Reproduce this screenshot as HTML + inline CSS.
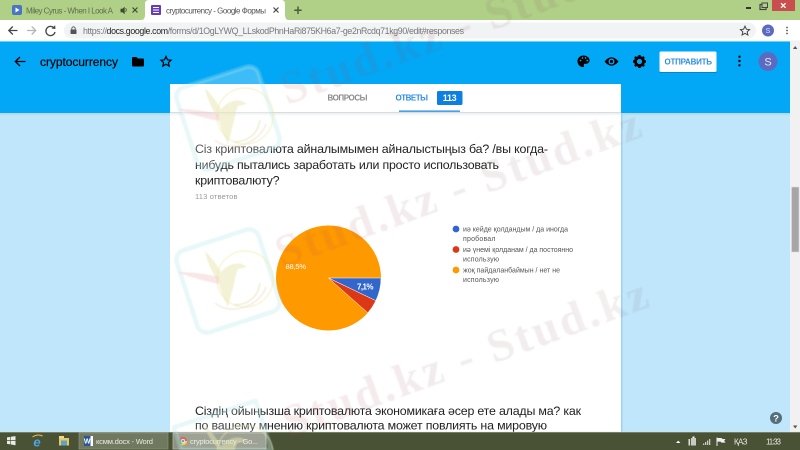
<!DOCTYPE html>
<html><head><meta charset="utf-8"><style>
html,body{margin:0;padding:0;width:800px;height:450px;overflow:hidden;background:#bfe6fb}
#w{position:absolute;left:0;top:0;width:800px;height:450px;overflow:hidden}
svg{display:block}
text{font-family:"Liberation Sans","DejaVu Sans",sans-serif}
</style></head><body><div id="w">
<svg width="800" height="450" viewBox="0 0 800 450" xmlns="http://www.w3.org/2000/svg">
<defs>
<filter id="b" x="-5%" y="-5%" width="110%" height="110%"><feGaussianBlur stdDeviation="0.38"/></filter>
<filter id="b2" x="-5%" y="-5%" width="110%" height="110%"><feGaussianBlur stdDeviation="0.5"/></filter>
<linearGradient id="sh" x1="0" y1="0" x2="0" y2="1"><stop offset="0" stop-color="#8fa8b5" stop-opacity=".55"/><stop offset="1" stop-color="#8fa8b5" stop-opacity="0"/></linearGradient>
<linearGradient id="wm" x1="0" y1="0" x2="1" y2="0"><stop offset="0" stop-color="#b84a58" stop-opacity=".11"/><stop offset=".5" stop-color="#805c60" stop-opacity=".11"/><stop offset="1" stop-color="#8c5a60" stop-opacity=".1"/></linearGradient>
<g id="logo">
<g transform="rotate(-18)">
<rect x="-43" y="-43" width="86" height="86" rx="10" fill="#fff" fill-opacity=".24" stroke="#b4e6e8" stroke-opacity=".3" stroke-width="4.5"/>
</g>
<circle cx="17" cy="-2" r="28" fill="none" stroke="#eee9a0" stroke-opacity=".55" stroke-width="1.2"/>
<path d="M-23 -30 C-15 -22 -10 -14 -7 -9 C-2 -15 6 -19 14 -17 L19 -14 L10 -12 C7 -6 7 2 4 10 C3 16 1 21 0 26 C-5 16 -8 8 -9 2 C-14 -6 -21 -18 -23 -30Z" fill="#e8e6b0" fill-opacity=".5"/>
<path d="M-51 -9 C-36 -9 -20 -7 -9 -4 L-9 3 C-20 1 -36 -3 -51 -9Z" fill="#f0c4c4" fill-opacity=".4"/>
<path d="M-13 22 C0 34 30 28 38 6" fill="none" stroke="#eed9c4" stroke-opacity=".55" stroke-width="1.4"/>
<path d="M6 24 C20 24 30 16 32 2" fill="none" stroke="#dfe0a0" stroke-opacity=".55" stroke-width="1.4"/>
</g>
</defs>

<!-- page background -->
<rect x="0" y="0" width="800" height="450" fill="#bfe6fb"/>
<rect x="0" y="41" width="790" height="72" fill="#02a8f6"/>
<rect x="0" y="113" width="170" height="3" fill="url(#sh)" opacity=".5"/>
<rect x="621" y="113" width="169" height="3" fill="url(#sh)" opacity=".5"/>
<rect x="621" y="113" width="1.5" height="320" fill="#9fd0ee"/>
<rect x="170" y="84" width="451" height="349" fill="#fff"/>
<rect x="170" y="112" width="451" height="1" fill="#dcdcdc"/>
<rect x="170" y="113" width="451" height="3" fill="url(#sh)" opacity=".35"/>

<!-- chrome frame -->
<rect x="0" y="0" width="800" height="20" fill="#b0cf87"/>
<path d="M141 20 Q145 20 145 15 L145 4 Q145 0 149 0 L281 0 Q285 0 285 4 L285 15 Q285 20 289 20Z" fill="#fff"/>
<rect x="0" y="20" width="800" height="21" fill="#fff"/>
<rect x="64" y="22.5" width="692" height="16" rx="8" fill="#f1f3f4"/>
<rect x="0" y="40.5" width="800" height="1" fill="#e4f2f8"/>

<g filter="url(#b)">
<!-- tabs -->
<rect x="12" y="5" width="10" height="10" rx="2" fill="#4a76c4"/>
<path d="M15.5 7.5 L19.5 10 L15.5 12.5Z" fill="#fff"/>
<text x="26" y="13.5" font-size="8" fill="#5f6e4b" textLength="87">Miley Cyrus - When I Look A</text>
<path d="M120.5 8.8 h1.8 l2.4 -2 v7.4 l-2.4 -2 h-1.8z" fill="#3f4a33"/><path d="M125.6 8.3 q1.4 1.7 0 3.4" fill="none" stroke="#3f4a33" stroke-width=".8"/>
<path d="M132.5 7.5 l5 5 M137.5 7.5 l-5 5" stroke="#3f4a33" stroke-width="1.2"/>
<rect x="151" y="5" width="10" height="10" rx="1" fill="#673ab7"/>
<path d="M153 7.5h6M153 10h6M153 12.5h6" stroke="#fff" stroke-width="1"/>
<text x="166" y="13.5" font-size="8" fill="#555" textLength="100">cryptocurrency - Google Формы</text>
<path d="M273.5 7.5 l5 5 M278.5 7.5 l-5 5" stroke="#444" stroke-width="1.2"/>
<path d="M298 6.5 v7.5 M294.2 10.2 h7.5" stroke="#4f5c3d" stroke-width="1.5"/>
<!-- window controls -->
<rect x="746" y="7" width="5" height="2" fill="#333"/>
<rect x="760" y="4.5" width="6" height="5" fill="none" stroke="#444" stroke-width="1.2"/><rect x="762" y="3" width="5.5" height="4.5" fill="#b0cf87" stroke="#444" stroke-width="1"/>
<rect x="772" y="0" width="23" height="11" fill="#c9504f"/>
<path d="M781 3.2 l4.6 4.6 M785.6 3.2 l-4.6 4.6" stroke="#fff" stroke-width="1.3"/>
<!-- nav -->
<path d="M17.5 30.5 H9 M12.8 26.5 L8.8 30.5 L12.8 34.5" fill="none" stroke="#444" stroke-width="1.3"/>
<path d="M27 30.5 H35.5 M31.7 26.5 L35.7 30.5 L31.7 34.5" fill="none" stroke="#b5b5b5" stroke-width="1.3"/>
<path d="M54 28 A4.6 4.6 0 1 0 55 32" fill="none" stroke="#444" stroke-width="1.3"/><path d="M51.6 28.6 L55.4 29 L55.2 25.2Z" fill="#444"/>
<rect x="70.5" y="29.5" width="6" height="4.5" rx=".6" fill="#555"/><path d="M71.8 29.5 v-1 a1.7 1.7 0 0 1 3.4 0 v1" fill="none" stroke="#555" stroke-width=".9"/>
<text x="83" y="34" font-size="8.8" fill="#777" textLength="381">https://<tspan fill="#222">docs.google.com</tspan>/forms/d/1OgLYWQ_LLskodPhnHaRi875KH6a7-ge2nRcdq71kg90/edit#responses</text>
<path d="M745 26.2 l1.4 3 3.2 .4 -2.4 2.2 .7 3.2 -2.9 -1.7 -2.9 1.7 .7 -3.2 -2.4 -2.2 3.2 -.4z" fill="none" stroke="#444" stroke-width="1"/>
<circle cx="768" cy="30.5" r="6" fill="#5c6bc0"/>
<text x="768" y="33.2" font-size="7" fill="#dfe3f5" text-anchor="middle">S</text>
<circle cx="787" cy="27.5" r=".9" fill="#555"/><circle cx="787" cy="30.5" r=".9" fill="#555"/><circle cx="787" cy="33.5" r=".9" fill="#555"/>

<!-- forms header -->
<path d="M25.5 61.5 H15.5 M20 57 L15.3 61.5 L20 66" fill="none" stroke="#000" stroke-width="1.3"/>
<text x="40" y="66" font-size="12" fill="#000" stroke="#000" stroke-width=".2" textLength="78">cryptocurrency</text>
<path d="M132 58 a1 1 0 0 1 1 -1 h3.5 l1.5 1.5 h5 a1 1 0 0 1 1 1 v6 a1 1 0 0 1 -1 1 h-10 a1 1 0 0 1 -1 -1z" fill="#000"/>
<path d="M166 56.5 l1.5 3.3 3.6 .4 -2.7 2.4 .8 3.5 -3.2 -1.9 -3.2 1.9 .8 -3.5 -2.7 -2.4 3.6 -.4z" fill="none" stroke="#000" stroke-width="1.2"/>
<path d="M583.5 55.5 a5.8 5.8 0 0 0 -.5 11.6 c1.2 0 1.3 -1 .9 -1.6 c-.5 -.9 .1 -1.8 1.1 -1.8 h1.6 a3.3 3.3 0 0 0 3 -3.2 c0 -2.8 -2.8 -5 -6.1 -5z" fill="#000"/>
<circle cx="580.5" cy="60.5" r=".9" fill="#02a8f6"/><circle cx="582.5" cy="58" r=".9" fill="#02a8f6"/><circle cx="585.5" cy="58" r=".9" fill="#02a8f6"/><circle cx="587.3" cy="60.5" r=".9" fill="#02a8f6"/>
<path d="M604.5 61.5 q7 -8.5 14 0 q-7 8.5 -14 0z" fill="#000"/><circle cx="611.5" cy="61.5" r="3" fill="#02a8f6"/><circle cx="611.5" cy="61.5" r="1.6" fill="#000"/>
<circle cx="639.5" cy="61.5" r="4" fill="none" stroke="#000" stroke-width="2.8"/>
<path d="M639.5 55 v2.4 M639.5 65.6 v2.4 M633 61.5 h2.4 M643.6 61.5 h2.4 M634.9 56.9 l1.8 1.8 M642.3 64.3 l1.8 1.8 M644.1 56.9 l-1.8 1.8 M636.7 64.3 l-1.8 1.8" stroke="#000" stroke-width="2.4"/>
<rect x="659.5" y="51.5" width="57" height="20.5" rx="1.5" fill="#fff"/>
<rect x="659.5" y="72" width="57" height="1" fill="#0288c8"/>
<text x="664.5" y="64.6" font-size="8" font-weight="700" fill="#2f8fe0" textLength="47.5">ОТПРАВИТЬ</text>
<circle cx="739.5" cy="56.7" r="1.2" fill="#000"/><circle cx="739.5" cy="61" r="1.2" fill="#000"/><circle cx="739.5" cy="65.3" r="1.2" fill="#000"/>
<circle cx="768" cy="61.5" r="9.5" fill="#5c6bc0"/>
<text x="768" y="65.5" font-size="11" fill="#e6e8f7" text-anchor="middle">S</text>

<!-- card tabs -->
<text x="327.5" y="100.5" font-size="8" font-weight="700" fill="#8a8a8a" textLength="40">ВОПРОСЫ</text>
<text x="395.5" y="100.5" font-size="8" font-weight="700" fill="#2a8fe6" textLength="32.5">ОТВЕТЫ</text>
<rect x="437" y="91" width="25.5" height="14" rx="1.5" fill="#0a7fe0"/>
<text x="442.7" y="100.8" font-size="9" font-weight="700" fill="#fff" textLength="14">113</text>
<rect x="399" y="110.5" width="61" height="1.3" fill="#1e88e5"/>

<!-- question 1 -->
<text x="195" y="153" font-size="12.4" fill="#202124" textLength="353">Сіз криптовалюта айналымымен айналыстыңыз ба? /вы когда-</text>
<text x="195" y="169" font-size="12.4" fill="#202124" textLength="304">нибудь пытались заработать или просто использовать</text>
<text x="195" y="184.5" font-size="12.4" fill="#202124" textLength="84.5">криптовалюту?</text>
<text x="195" y="199" font-size="7.6" fill="#999" textLength="42.5">113 ответов</text>

<!-- pie -->
<circle cx="328.5" cy="278" r="52.5" fill="#ff9900"/>
<path d="M328.5 278 L381 278 A52.5 52.5 0 0 1 375.8 300.7Z" fill="#3366cc" stroke="#fff" stroke-width=".5"/>
<path d="M328.5 278 L375.8 300.7 A52.5 52.5 0 0 1 367.8 312.8Z" fill="#dc3912" stroke="#fff" stroke-width=".5"/>
<text x="285.5" y="269" font-size="7.5" fill="#fff" textLength="20.5">88,5%</text>
<text x="357" y="289.5" font-size="8" font-weight="700" fill="#fff" textLength="16.5">7,1%</text>

<!-- legend -->
<circle cx="456" cy="229" r="3.4" fill="#3366cc"/>
<circle cx="456" cy="249.5" r="3.4" fill="#dc3912"/>
<circle cx="456" cy="270" r="3.4" fill="#ff9900"/>
<g font-size="7" fill="#555">
<text x="463" y="231.5" textLength="105">иә кейде қолдандым / да иногда</text>
<text x="463" y="241" textLength="32.5">пробовал</text>
<text x="463" y="252" textLength="110">иә үнемі қолданам / да постоянно</text>
<text x="463" y="261.5" textLength="36">использую</text>
<text x="463" y="272.5" textLength="97">жоқ пайдаланбаймын / нет не</text>
<text x="463" y="282" textLength="36">использую</text>
</g>

<!-- question 2 -->
<text x="195" y="415" font-size="12.4" fill="#202124" textLength="386">Сіздің ойыңызша криптовалюта экономикаға әсер ете алады ма? как</text>
<text x="195" y="429.5" font-size="12.4" fill="#202124" textLength="352">по вашему мнению криптовалюта может повлиять на мировую</text>

<!-- help -->
<circle cx="776" cy="418" r="6" fill="#546e7a"/>
<text x="776" y="421.5" font-size="9.5" font-weight="700" fill="#fff" text-anchor="middle">?</text>
</g>

<!-- scrollbar -->
<rect x="790" y="41" width="10" height="392" fill="#f1f1f1"/>
<rect x="791.5" y="187" width="7.5" height="65" fill="#a6a6a6" stroke="#ddd" stroke-width=".6"/>
<path d="M793 49 l2.2 -3 2.2 3z" fill="#555"/>
<path d="M793 425.5 l2.2 3 2.2 -3z" fill="#555"/>

<!-- taskbar -->
<rect x="0" y="432" width="800" height="18" fill="#4a5235"/>
<rect x="0" y="431.5" width="800" height="1" fill="#dfe6df" opacity=".6"/>
<g filter="url(#b)">
<path d="M7 437.4 l3.4 -.5 v3.4 h-3.4z M11 436.8 l4.5 -.7 v4.2 h-4.5z M7 441 h3.4 v3.4 l-3.4 -.5z M11 441 h4.5 v4.2 l-4.5 -.7z" fill="#e8ece4"/>
<text x="37" y="446.5" font-size="13" font-style="italic" font-weight="700" fill="#4aa6e8" text-anchor="middle">e</text>
<path d="M32.5 437 q5 -3.5 10 -1" fill="none" stroke="#f0c040" stroke-width="1"/>
<rect x="59" y="438" width="10" height="7.5" fill="#e8c766"/><rect x="59" y="436" width="5" height="2.5" fill="#f0d98a"/><rect x="61" y="440.5" width="6" height="5" fill="#5aa5c8"/>
<rect x="79" y="433" width="89" height="16" fill="#70785e" stroke="#8b927a" stroke-width=".7"/>
<rect x="84" y="436" width="9" height="10" fill="#fff"/><rect x="84" y="436" width="6.5" height="10" fill="#2b5797"/>
<text x="87.2" y="443.5" font-size="7" font-weight="700" fill="#fff" text-anchor="middle">W</text>
<text x="96" y="444" font-size="7.6" fill="#e8ebe0" textLength="57">ксмм.docx - Word</text>
<rect x="173" y="433" width="93" height="16" fill="#8c9180" stroke="#b5b8aa" stroke-width=".8"/>
<circle cx="183" cy="441" r="4.2" fill="#e04a3a"/><path d="M183 441 L187.2 441 A4.2 4.2 0 0 1 181 444.7Z" fill="#f2c230"/><path d="M183 441 L181 444.7 A4.2 4.2 0 0 1 179.3 439Z" fill="#3fa54f"/><circle cx="183" cy="441" r="1.7" fill="#4a8de8" stroke="#fff" stroke-width=".6"/>
<text x="190" y="444" font-size="7.6" fill="#e8ebe0" textLength="68">cryptocurrency - Go...</text>
<path d="M676 443 l2.2 -2.4 2.2 2.4z" fill="#fff"/>
<rect x="691" y="438" width="5" height="7.5" fill="#c8ccc0"/><rect x="688.5" y="439" width="1.6" height="6.5" fill="#dfe2d8"/><rect x="692.5" y="436.5" width="2" height="1.5" fill="#fff"/>
<path d="M703 445 h1.3 v-1.5 h-1.3z M705 445 h1.3 v-3 h-1.3z M707 445 h1.3 v-4.5 h-1.3z M709 445 h1.3 v-6 h-1.3z" fill="#c8ccc0"/>
<path d="M717 437.5 v8.5" stroke="#eee" stroke-width="1"/><path d="M717.5 438 h4 l1 1 h3 l-1.3 1.8 1.3 1.8 h-4 l-1 -1 h-3z" fill="#eee"/>
<text x="734" y="444.5" font-size="8" fill="#e8ebe0" textLength="13.5">ҚАЗ</text>
<text x="766" y="444.5" font-size="8" fill="#e8ebe0" textLength="15">11:33</text>
</g>

<!-- watermarks -->
<g filter="url(#b2)">
<use href="#logo" transform="translate(228 118)"/>
<use href="#logo" transform="translate(228 281)"/>
<!-- third logo, cut at the bottom edge of the frame -->
<path d="M181.2 450 L173.8 427.4 L255.6 400.8 L271.6 450Z" fill="#fff" fill-opacity=".16" stroke="#b4e6e8" stroke-opacity=".3" stroke-width="4.5" stroke-linejoin="round"/>
<path d="M217.2 450 A28 28 0 0 1 272.8 450" fill="none" stroke="#eee9a0" stroke-opacity=".55" stroke-width="1.2"/>
<path d="M205 425 C213 433 218 441 221 446 C226 440 234 436 242 438 L247 441 L238 443 C236 445 235 448 235 450 L219 450 C214 443 207 437 205 425Z" fill="#e8e6b0" fill-opacity=".5"/>
<g font-size="46" font-weight="700" letter-spacing="3" fill="url(#wm)">
<text transform="translate(287 105) rotate(-20)" style="font-family:'Liberation Serif',serif">Stud.kz - Stud.kz</text>
<text transform="translate(282 268) rotate(-20)" style="font-family:'Liberation Serif',serif">Stud.kz - Stud.kz</text>
<text transform="translate(289 438) rotate(-20)" style="font-family:'Liberation Serif',serif">Stud.kz - Stud.kz</text>
</g>
</g>
</svg>
</div></body></html>
